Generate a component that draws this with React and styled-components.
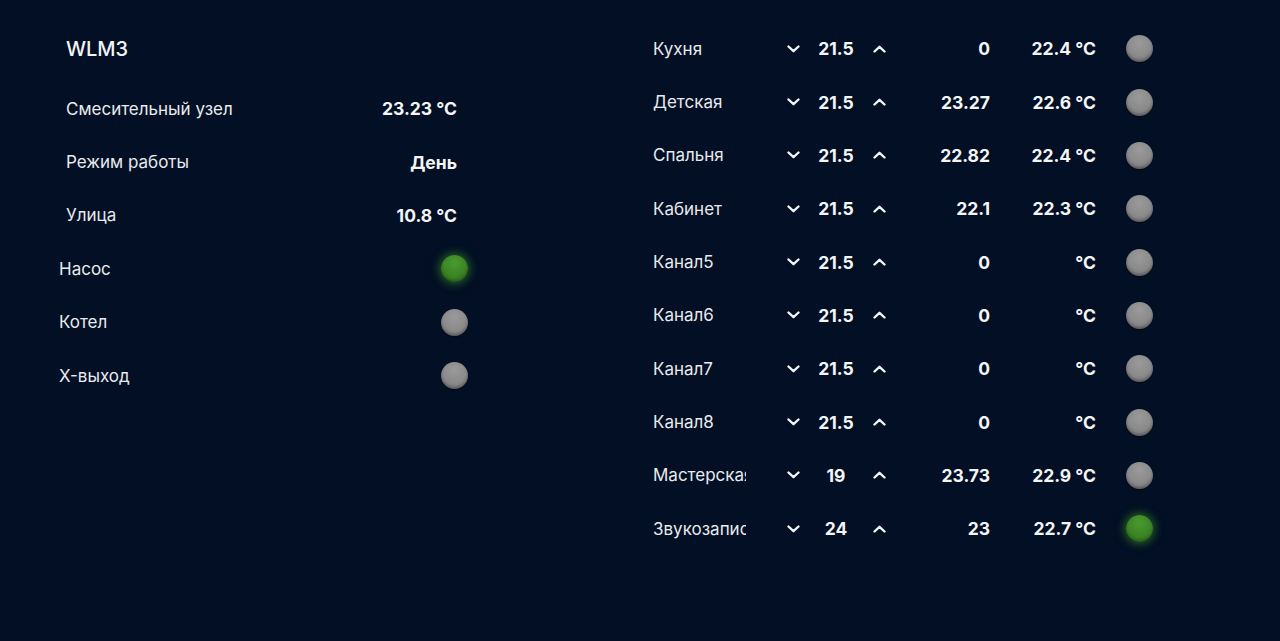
import React from "react";
import styled, { createGlobalStyle, css } from "styled-components";

const GlobalStyle = createGlobalStyle`
  html, body {
    margin: 0;
    padding: 0;
    background: #020f24;
  }
  body {
    font-family: Inter, "Noto Sans", "Liberation Sans", sans-serif;
    color: #eef0f3;
    -webkit-font-smoothing: antialiased;
  }
`;

const Page = styled.div`
  width: 1280px;
  height: 641px;
  background: #020f24;
  display: flex;
  padding-top: 22px;
  box-sizing: border-box;
`;

const LeftPanel = styled.div`
  margin-left: 59px;
  width: 410px;
  display: flex;
  flex-direction: column;
`;

const RightPanel = styled.div`
  margin-left: 184px;
  display: flex;
  flex-direction: column;
`;

const Title = styled.div`
  height: 53px;
  padding-left: 7px;
  margin-bottom: 7px;
  display: flex;
  align-items: center;
  font-size: 20px;
  font-weight: 500;
  color: #f2f3f5;
`;

const Row = styled.div`
  height: 53.4px;
  display: flex;
  align-items: center;
  justify-content: space-between;
  font-size: 17px;
  ${({ $sensor }) =>
    $sensor
      ? css`
          padding: 0 12px 0 7px;
        `
      : css`
          padding: 0 1px 0 0;
        `}
`;

const Label = styled.span`
  color: #e8eaee;
  font-weight: 400;
`;

const Value = styled.span`
  font-weight: 700;
  font-size: 17.5px;
  color: #f4f5f7;
`;

const Led = styled.span`
  width: 27px;
  height: 27px;
  border-radius: 50%;
  flex: none;
  ${({ $on }) =>
    $on
      ? css`
          background: radial-gradient(circle at 50% 30%, #4a9a30 0%, #3a8424 55%, #2f711c 100%);
          box-shadow: 0 0 8px 2px rgba(70, 160, 40, 0.55), inset 0 -2px 3px rgba(0, 0, 0, 0.25);
        `
      : css`
          background: radial-gradient(circle at 50% 30%, #9a9a9a 0%, #8a8a8a 55%, #767676 100%);
          box-shadow: inset 0 -2px 3px rgba(0, 0, 0, 0.3), 0 1px 1px rgba(0, 0, 0, 0.4);
        `}
`;

const ZoneRow = styled.div`
  height: 53.35px;
  display: grid;
  grid-template-columns: 133px 14px 72px 14px 104px 106px 57px;
  align-items: center;
  font-size: 17px;
`;

const ZoneName = styled.span`
  width: 93px;
  overflow: hidden;
  white-space: nowrap;
  color: #e8eaee;
`;

const Setpoint = styled.span`
  text-align: center;
  font-weight: 700;
  font-size: 17.5px;
  color: #f4f5f7;
`;

const Num = styled.span`
  text-align: right;
  font-weight: 700;
  font-size: 17.5px;
  color: #f4f5f7;
`;

const Arrow = styled.span`
  display: flex;
  justify-content: center;
  align-items: center;
`;

const LedCell = styled.span`
  display: flex;
  justify-content: flex-end;
`;

const Chevron = ({ up }) => (
  <Arrow>
    <svg width="13" height="8" viewBox="0 0 13 8">
      <polyline
        points={up ? "1.5,6.5 6.5,1.8 11.5,6.5" : "1.5,1.5 6.5,6.2 11.5,1.5"}
        fill="none"
        stroke="#f2f3f5"
        strokeWidth="2.4"
        strokeLinecap="round"
        strokeLinejoin="round"
      />
    </svg>
  </Arrow>
);

const sensors = [
  { label: "Смесительный узел", value: "23.23 °C" },
  { label: "Режим работы", value: "День" },
  { label: "Улица", value: "10.8 °C" },
];

const outputs = [
  { label: "Насос", on: true },
  { label: "Котел", on: false },
  { label: "X-выход", on: false },
];

const zones = [
  { name: "Кухня", set: "21.5", valve: "0", temp: "22.4 °C", on: false },
  { name: "Детская", set: "21.5", valve: "23.27", temp: "22.6 °C", on: false },
  { name: "Спальня", set: "21.5", valve: "22.82", temp: "22.4 °C", on: false },
  { name: "Кабинет", set: "21.5", valve: "22.1", temp: "22.3 °C", on: false },
  { name: "Канал5", set: "21.5", valve: "0", temp: "°C", on: false },
  { name: "Канал6", set: "21.5", valve: "0", temp: "°C", on: false },
  { name: "Канал7", set: "21.5", valve: "0", temp: "°C", on: false },
  { name: "Канал8", set: "21.5", valve: "0", temp: "°C", on: false },
  { name: "Мастерская", set: "19", valve: "23.73", temp: "22.9 °C", on: false },
  { name: "Звукозапись", set: "24", valve: "23", temp: "22.7 °C", on: true },
];

export default function App() {
  return (
    <>
      <GlobalStyle />
      <Page>
        <LeftPanel>
          <Title>WLM3</Title>
          {sensors.map((s) => (
            <Row $sensor key={s.label}>
              <Label>{s.label}</Label>
              <Value>{s.value}</Value>
            </Row>
          ))}
          {outputs.map((o) => (
            <Row key={o.label}>
              <Label>{o.label}</Label>
              <Led $on={o.on} />
            </Row>
          ))}
        </LeftPanel>
        <RightPanel>
          {zones.map((z) => (
            <ZoneRow key={z.name}>
              <ZoneName>{z.name}</ZoneName>
              <Chevron />
              <Setpoint>{z.set}</Setpoint>
              <Chevron up />
              <Num>{z.valve}</Num>
              <Num>{z.temp}</Num>
              <LedCell>
                <Led $on={z.on} />
              </LedCell>
            </ZoneRow>
          ))}
        </RightPanel>
      </Page>
    </>
  );
}
